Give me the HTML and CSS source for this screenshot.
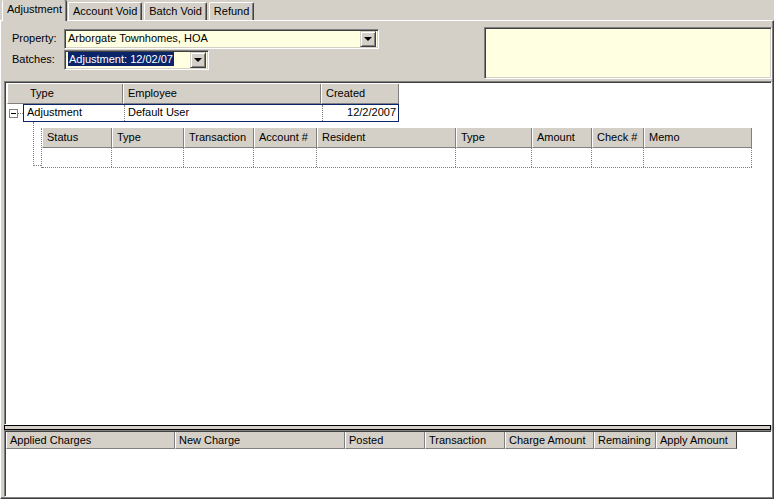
FILE: index.html
```html
<!DOCTYPE html>
<html lang="en">
<head>
    <meta charset="UTF-8">
    <title>Adjustment</title>
    <link rel="stylesheet" href="styles.css">
</head>
<body>
    <div class="tabs">
        <div class="tab selected">Adjustment</div>
        <div class="tab">Account Void</div>
        <div class="tab">Batch Void</div>
        <div class="tab">Refund</div>
    </div>

    <div class="page">
        <div class="top-area">
            <div class="fields">
                <div class="field">
                    <label>Property:</label>
                    <div class="combo combo-wide">
                        <span class="combo-text">Arborgate Townhomes, HOA</span>
                        <span class="drop"><span class="arrow"></span></span>
                    </div>
                </div>
                <div class="field">
                    <label>Batches:</label>
                    <div class="combo combo-short">
                        <span class="combo-text"><span class="highlight">Adjustment: 12/02/07</span></span>
                        <span class="drop"><span class="arrow"></span></span>
                    </div>
                </div>
            </div>
            <div class="note-box"></div>
        </div>

        <div class="grid main-grid">
            <div class="hdr-row">
                <div class="hcell c-type">Type</div>
                <div class="hcell c-emp">Employee</div>
                <div class="hcell c-created">Created</div>
            </div>
            <div class="data-row">
                <div class="expander-col">
                    <span class="expander"><span class="minus"></span></span>
                    <span class="stub"></span>
                </div>
                <div class="selected-row">
                    <div class="dcell d-type">Adjustment</div>
                    <div class="dcell d-emp">Default User</div>
                    <div class="dcell d-created">12/2/2007</div>
                </div>
            </div>
            <div class="child-wrap">
                <div class="connector"></div>
                <div class="band">
                    <div class="band-hdr">
                        <div class="hcell" style="width:70px">Status</div>
                        <div class="hcell" style="width:72px">Type</div>
                        <div class="hcell" style="width:70px">Transaction</div>
                        <div class="hcell" style="width:63px">Account #</div>
                        <div class="hcell" style="width:139px">Resident</div>
                        <div class="hcell" style="width:76px">Type</div>
                        <div class="hcell" style="width:60px">Amount</div>
                        <div class="hcell" style="width:52px">Check #</div>
                        <div class="hcell" style="width:108px">Memo</div>
                    </div>
                    <div class="band-row">
                        <div class="bcell" style="width:70px"></div>
                        <div class="bcell" style="width:72px"></div>
                        <div class="bcell" style="width:70px"></div>
                        <div class="bcell" style="width:63px"></div>
                        <div class="bcell" style="width:139px"></div>
                        <div class="bcell" style="width:76px"></div>
                        <div class="bcell" style="width:60px"></div>
                        <div class="bcell" style="width:52px"></div>
                        <div class="bcell" style="width:108px"></div>
                    </div>
                </div>
            </div>
        </div>

        <div class="splitter"></div>

        <div class="grid bottom-grid">
            <div class="hdr-row small">
                <div class="hcell" style="width:169px">Applied Charges</div>
                <div class="hcell" style="width:170px">New Charge</div>
                <div class="hcell" style="width:80px">Posted</div>
                <div class="hcell" style="width:80px">Transaction</div>
                <div class="hcell" style="width:89px">Charge Amount</div>
                <div class="hcell" style="width:62px">Remaining</div>
                <div class="hcell last" style="width:81px">Apply Amount</div>
            </div>
        </div>
    </div>
</body>
</html>
```

FILE: styles.css
```css
* {
    margin: 0;
    padding: 0;
    box-sizing: border-box;
}

body {
    font-family: 'Liberation Sans', Arial, sans-serif;
    font-size: 11px;
    color: #000;
    background: #d4d0c8;
    width: 774px;
    height: 499px;
    overflow: hidden;
}

/* tabs */
.tabs {
    display: flex;
    align-items: flex-end;
    height: 20px;
    padding-left: 2px;
}

.tab {
    height: 18px;
    line-height: 17px;
    padding: 0 4px 0 4px;
    margin-right: 2px;
    border-top: 1px solid #fff;
    border-left: 1px solid #fff;
    border-right: 1px solid #404040;
    box-shadow: inset -1px 0 #808080;
    border-top-left-radius: 2px;
    border-top-right-radius: 2px;
}

.tab.selected {
    height: 21px;
    line-height: 19px;
    padding: 0 4px 0 4px;
    margin-bottom: -1px;
    margin-right: 1px;
    background: #d4d0c8;
    position: relative;
    z-index: 1;
    border-top: none;
}

.page {
    height: 479px;
    border-top: 1px solid #fff;
    border-left: 1px solid #fff;
    border-right: 1px solid #404040;
    border-bottom: 1px solid #404040;
    box-shadow: inset -1px -1px #808080;
    padding: 0 1px 1px 3px;
    display: flex;
    flex-direction: column;
}

/* header fields */
.top-area {
    display: flex;
    height: 60px;
    padding-top: 7px;
}

.fields {
    padding-left: 8px;
}

.field {
    display: flex;
    align-items: center;
    height: 21px;
}

.field label {
    width: 52px;
    padding-bottom: 2px;
}

.combo {
    display: flex;
    height: 20px;
    background: #ffffe1;
    border-top: 1px solid #808080;
    border-left: 1px solid #808080;
    border-right: 1px solid #fff;
    border-bottom: 1px solid #fff;
    box-shadow: inset 1px 1px #404040, inset -1px -1px #d4d0c8;
    padding: 2px;
}

.combo-wide { width: 315px; }
.combo-short { width: 145px; }

.combo-text {
    flex: 1;
    line-height: 13px;
    padding-left: 1px;
    white-space: nowrap;
}

.highlight {
    background: #0a246a;
    color: #fff;
    padding: 1px 1px;
}

.drop {
    width: 16px;
    height: 16px;
    margin-top: -1px;
    background: #d4d0c8;
    border-top: 1px solid #d4d0c8;
    border-left: 1px solid #d4d0c8;
    border-right: 1px solid #404040;
    border-bottom: 1px solid #404040;
    box-shadow: inset 1px 1px #fff, inset -1px -1px #808080;
    display: flex;
    align-items: center;
    justify-content: center;
}

.arrow {
    width: 0;
    height: 0;
    border-left: 4px solid transparent;
    border-right: 4px solid transparent;
    border-top: 4px solid #000;
    margin-top: 1px;
}

.note-box {
    margin-left: auto;
    margin-top: -1px;
    width: 288px;
    height: 52px;
    background: #ffffe1;
    border-top: 1px solid #808080;
    border-left: 1px solid #808080;
    border-right: 1px solid #fff;
    border-bottom: 1px solid #fff;
    box-shadow: inset 1px 1px #404040, inset -1px -1px #d4d0c8;
}

/* grids */
.grid {
    background: #fff;
    border-top: 1px solid #808080;
    border-left: 1px solid #808080;
    border-right: 1px solid #fff;
    border-bottom: 1px solid #fff;
    box-shadow: inset 1px 1px #404040;
    padding: 2px 0 0 2px;
}

.main-grid {
    height: 344px;
}

.hdr-row {
    display: flex;
    height: 20px;
}

.hcell {
    height: 100%;
    background: #d4d0c8;
    border-left: 1px solid #fff;
    border-right: 1px solid #808080;
    border-bottom: 1px solid #808080;
    padding-left: 4px;
    line-height: 19px;
    white-space: nowrap;
}

.c-type { width: 116px; padding-left: 22px; }
.c-emp { width: 198px; }
.c-created { width: 78px; }

.data-row {
    display: flex;
    height: 18px;
}

.expander-col {
    width: 16px;
    display: flex;
    align-items: center;
    padding-left: 2px;
}

.expander {
    width: 9px;
    height: 9px;
    border: 1px solid #808080;
    display: flex;
    align-items: center;
    justify-content: center;
}

.minus {
    width: 5px;
    height: 1px;
    background: #000;
}

.stub {
    width: 5px;
    border-top: 1px dotted #808080;
}

.selected-row {
    display: flex;
    width: 376px;
    border: 1px solid #0a246a;
}

.dcell {
    line-height: 15px;
    padding-left: 3px;
    white-space: nowrap;
}

.d-type { width: 100px; }
.d-emp {
    width: 198px;
    border-left: 1px dotted #808080;
}
.d-created {
    width: 76px;
    border-left: 1px dotted #808080;
    text-align: right;
    padding-right: 2px;
}

.child-wrap {
    display: flex;
}

.connector {
    margin-left: 26px;
    width: 8px;
    height: 44px;
    border-left: 1px dotted #808080;
    border-bottom: 1px dotted #808080;
}

.band {
    margin-top: 6px;
    border-left: 1px dotted #808080;
}

.band-hdr {
    display: flex;
    height: 20px;
}

.band-row {
    display: flex;
    height: 20px;
    border-bottom: 1px dotted #808080;
}

.bcell {
    border-right: 1px dotted #808080;
}

.splitter {
    height: 5px;
    margin-right: 1px;
    background: #d4d0c8;
    border: 1px solid #000;
}

.bottom-grid {
    flex: 1;
    padding: 1px 0 0 1px;
}

.hdr-row.small {
    height: 17px;
}

.hdr-row.small .hcell {
    line-height: 16px;
    padding-left: 3px;
}

.hcell.last {
    border-right: 1px solid #404040;
}
```
